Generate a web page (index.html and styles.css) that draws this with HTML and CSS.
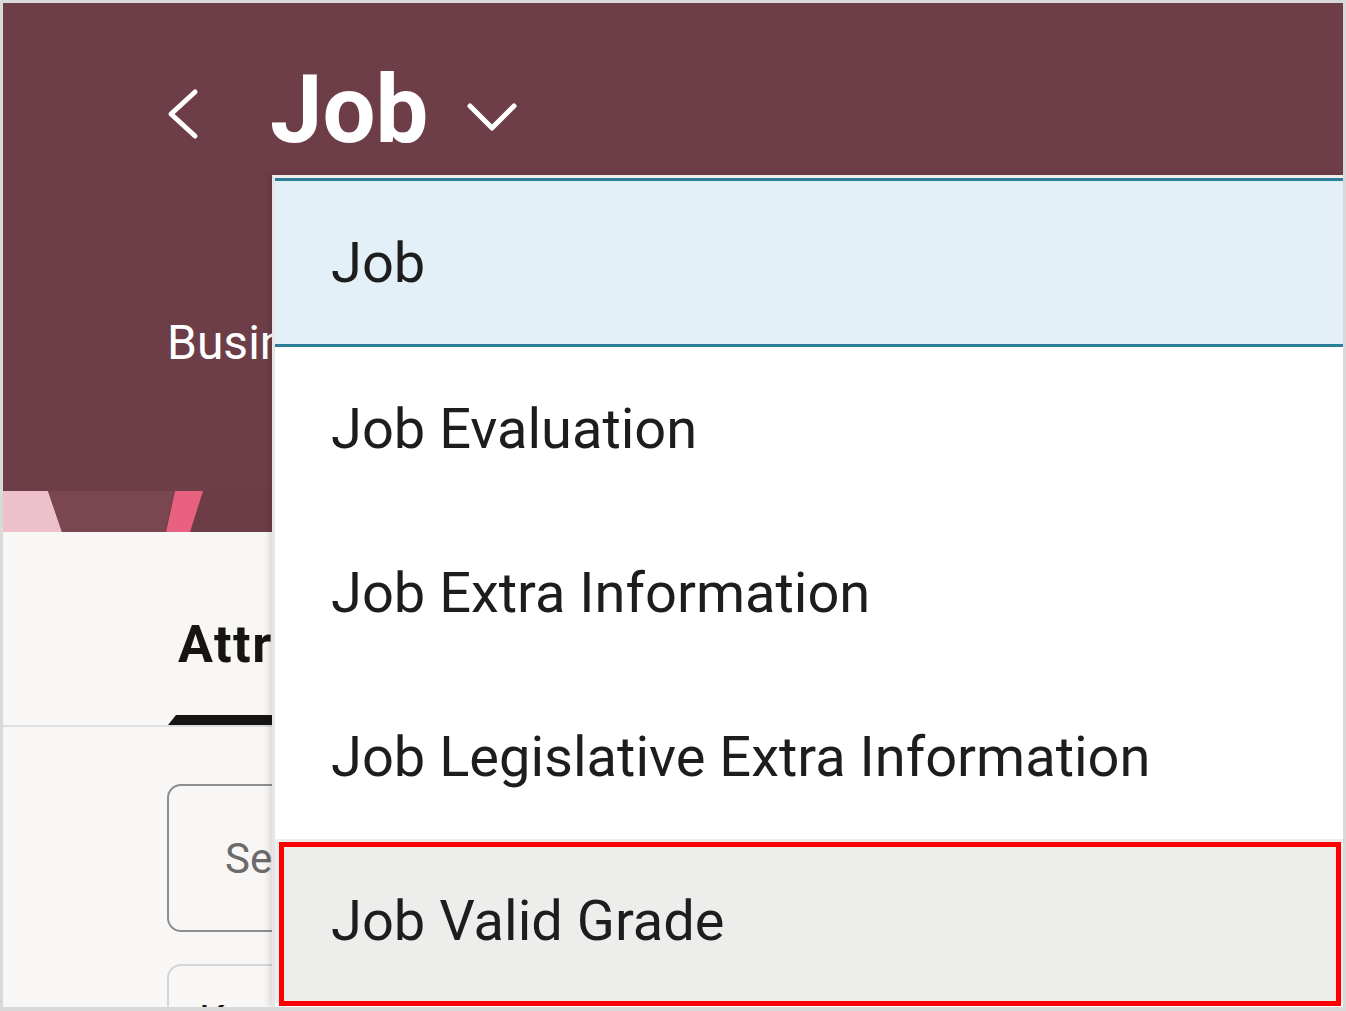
FILE: index.html
```html
<!DOCTYPE html>
<html lang="en">
<head>
<meta charset="utf-8">
<title>Job</title>
<link rel="stylesheet" href="styles.css">
</head>
<body>
<div class="frame">
  <header class="header">
    <div class="title-row">
      <svg class="back" width="36" height="94" viewBox="0 0 36 94" aria-hidden="true">
        <polyline points="28,33 4,55 28,77" fill="none" stroke="#ffffff" stroke-width="5" stroke-linecap="round" stroke-linejoin="round"/>
      </svg>
      <h1 class="title">Job</h1>
      <svg class="down" width="56" height="94" viewBox="0 0 56 94" aria-hidden="true">
        <polyline points="8,47 30,69 52,47" fill="none" stroke="#ffffff" stroke-width="5" stroke-linecap="round" stroke-linejoin="round"/>
      </svg>
    </div>
    <div class="label">Business Unit</div>
    <svg class="band" width="1340" height="41" viewBox="0 0 1340 41" aria-hidden="true">
      <rect x="0" y="0" width="1340" height="41" fill="#6c3d47"/>
      <polygon points="0,0 45,0 59,41 0,41" fill="#ecc1cb"/>
      <polygon points="45,0 171,0 162,41 59,41" fill="#7a4751"/>
      <polygon points="172,0 200,0 187,41 163,41" fill="#e8617f"/>
    </svg>
  </header>

  <main class="content">
    <div class="tabs">
      <div class="tab">Attributes</div>
    </div>
    <div class="field">Search</div>
    <div class="field field-light">Keywords</div>
  </main>

  <ul class="dropdown">
    <li class="item selected">Job</li>
    <li class="item">Job Evaluation</li>
    <li class="item">Job Extra Information</li>
    <li class="item">Job Legislative Extra Information</li>
    <li class="item hovered">Job Valid Grade</li>
  </ul>
  <div class="annotation"></div>
</div>
</body>
</html>
```

FILE: styles.css
```css
html, body {
  margin: 0;
  padding: 0;
  background: #ffffff;
}

.frame {
  width: 1346px;
  height: 1011px;
  box-sizing: border-box;
  border-style: solid;
  border-color: #d9d9d9;
  border-width: 3px 3px 4px 3px;
  position: relative;
  overflow: hidden;
  background: #f8f7f5;
  font-family: Roboto, "Noto Sans", sans-serif;
}

.header {
  height: 529px;
  background: #6d3e48;
  display: flex;
  flex-direction: column;
}

.title-row {
  display: flex;
  align-items: flex-start;
  height: 94px;
  margin-top: 56px;
  padding-left: 164px;
}

.back {
  display: block;
  flex: none;
}

.title {
  margin: 0 0 0 67px;
  padding-top: 4px;
  font-size: 94px;
  line-height: 1;
  font-weight: 700;
  color: #ffffff;
}

.down {
  display: block;
  flex: none;
  margin-left: 34px;
}

.label {
  margin-top: 166px;
  padding-left: 164px;
  font-size: 48px;
  line-height: 1;
  color: #ffffff;
}

.band {
  display: block;
  margin-top: auto;
}

.content {
  display: flex;
  flex-direction: column;
}

.tabs {
  margin-top: 87px;
  padding-left: 165px;
  border-bottom: 2px solid #dedede;
}

.tab {
  position: relative;
  display: inline-block;
  padding: 0 40px 54px 10px;
  font-size: 52px;
  line-height: 1;
  font-weight: 700;
  letter-spacing: 1.5px;
  color: #161513;
}

.tab::after {
  content: "";
  position: absolute;
  left: 0;
  right: 0;
  bottom: 0;
  height: 10px;
  background: #161513;
  clip-path: polygon(8px 0, 100% 0, 100% 100%, 0 100%);
}

.field {
  margin: 57px 0 0 164px;
  width: 1000px;
  height: 148px;
  box-sizing: border-box;
  border: 2px solid #8e8e8e;
  border-radius: 14px;
  display: flex;
  align-items: center;
  padding-left: 56px;
  font-size: 42px;
  color: #6b6b6b;
}

.field-light {
  margin-top: 32px;
  height: 120px;
  border-color: #d6d6d6;
  align-items: flex-start;
  padding: 30px 0 0 30px;
  color: #161513;
}

.dropdown {
  position: absolute;
  left: 269px;
  top: 172px;
  right: 0;
  bottom: 0;
  margin: 0;
  padding: 0;
  list-style: none;
  background: #ffffff;
  border-left: 3px solid #e6e6e6;
  border-top: 3px solid #f1ecec;
  box-shadow: -3px 0 6px rgba(0, 0, 0, 0.12);
}

.item {
  height: 164px;
  box-sizing: border-box;
  display: flex;
  align-items: center;
  padding-left: 56px;
  font-size: 56px;
  color: #1d1d1d;
  white-space: nowrap;
}

.item.selected {
  height: 169px;
  background: #e4f0f7;
  border-top: 3px solid #2b7f98;
  border-bottom: 3px solid #2b7f98;
}

.item.hovered {
  background: #ededeb;
}

.annotation {
  position: absolute;
  left: 276px;
  top: 839px;
  width: 1062px;
  height: 164px;
  box-sizing: border-box;
  border: 5px solid #ff0000;
}
```
